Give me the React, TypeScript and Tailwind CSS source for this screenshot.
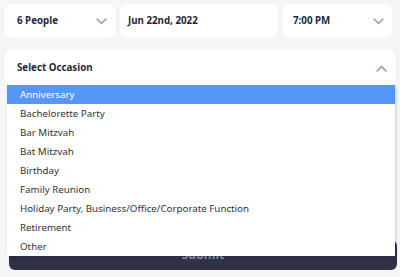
import React from "react";

const Chevron = ({ up = false }: { up?: boolean }) => (
  <svg width="11" height="7" viewBox="0 0 11 7" fill="none" className="shrink-0">
    <path
      d={up ? "M1.2 5.8 L5.5 1.5 L9.8 5.8" : "M1.2 1.2 L5.5 5.5 L9.8 1.2"}
      stroke="#9ca3af"
      strokeWidth="1.7"
      strokeLinecap="round"
      strokeLinejoin="round"
    />
  </svg>
);

const options = [
  "Anniversary",
  "Bachelorette Party",
  "Bar Mitzvah",
  "Bat Mitzvah",
  "Birthday",
  "Family Reunion",
  "Holiday Party, Business/Office/Corporate Function",
  "Retirement",
  "Other",
];

export default function App() {
  return (
    <div
      className="w-[400px] h-[277px] overflow-hidden bg-[#f5f6f8] pt-[4px] px-[5px]"
      style={{ fontFamily: '"Noto Sans", "Open Sans", sans-serif' }}
    >
      <div className="flex gap-[5px] h-[33px]">
        <div className="w-[110px] bg-white rounded-md flex items-center justify-between pl-[12px] pr-[8px] pt-[2px]">
          <span className="text-[9.75px] font-bold text-[#1f2937]">6 People</span>
          <Chevron />
        </div>
        <div className="w-[158px] bg-white rounded-md flex items-center pl-[8px] pt-[2px]">
          <span className="text-[9.75px] font-bold text-[#1f2937]">Jun 22nd, 2022</span>
        </div>
        <div className="w-[109px] bg-white rounded-md flex items-center justify-between pl-[10px] pr-[8px] pt-[2px]">
          <span className="text-[9.75px] font-bold text-[#1f2937]">7:00 PM</span>
          <Chevron />
        </div>
      </div>

      <div className="relative mt-[13px]">
        <div className="h-[35px] bg-white rounded-t-md flex items-center justify-between pl-[12px] pr-[8px] pt-[2px]">
          <span className="text-[9.75px] font-bold text-[#1f2937]">Select Occasion</span>
          <Chevron up />
        </div>
        <div className="absolute left-[2px] right-0 top-[35px] z-10 bg-white shadow-[1px_1px_3px_rgba(0,0,0,0.18)]">
          {options.map((o, i) => (
            <div
              key={o}
              className={`h-[19px] flex items-center pl-[13px] pt-[1px] text-[9.75px] ${
                i === 0 ? "bg-[#5596f7] text-white" : "text-[#333]"
              }`}
            >
              {o}
            </div>
          ))}
        </div>
        <div className="ml-[4px] mr-[-2px] mt-[155px] h-[30px] rounded-md bg-[#2f3146] flex items-center justify-center">
          <span className="text-[12px] font-bold text-[#8b8fa3]">Submit</span>
        </div>
      </div>
    </div>
  );
}
